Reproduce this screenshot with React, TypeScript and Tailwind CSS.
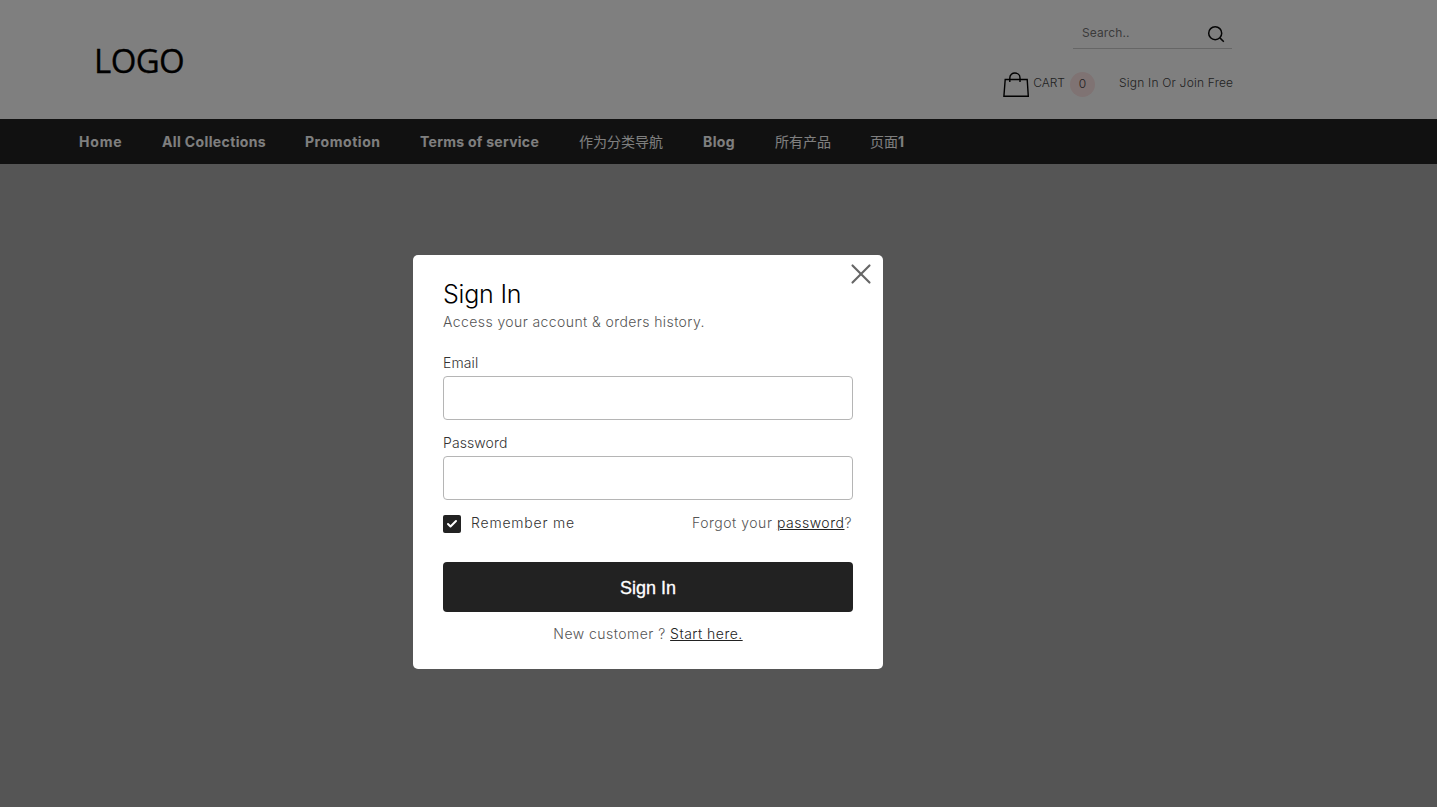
import { Check, X } from "lucide-react";

const navItems = [
  { label: "Home", cls: "w-[43px] font-bold tracking-[0.8px]" },
  { label: "All Collections", cls: "w-[103px] font-bold tracking-[0.37px]" },
  { label: "Promotion", cls: "w-[75px] font-bold tracking-[0.55px]" },
  { label: "Terms of service", cls: "w-[119px] font-bold tracking-[0.27px]" },
  { label: "作为分类导航", cls: "w-[84px] font-normal" },
  { label: "Blog", cls: "w-[32px] font-bold tracking-[0.4px]" },
  { label: "所有产品", cls: "w-[55px] font-normal" },
  { label: "页面", suffix: "1", cls: "w-[34px] font-normal" },
];

const sans = "font-['Inter','Noto_Sans_CJK_SC',sans-serif]";

function SearchIcon() {
  return (
    <svg viewBox="0 0 18 18" className="mt-[2px] h-[18px] w-[18px]" fill="none" stroke="#0a0a0a" strokeWidth="1.5">
      <circle cx="8.2" cy="8.2" r="6.5" />
      <path d="M12.9 12.9 L16.8 16.8" />
    </svg>
  );
}

function BagIcon() {
  return (
    <svg viewBox="0 0 26 26" className="h-[26px] w-[26px]" fill="none" stroke="#000" strokeWidth="1.4">
      <path d="M2.2 7.5 H24.2 L25.3 24.3 H0.9 Z" />
      <path d="M6.8 10 V6 C6.8 -0.6 17 -0.6 17 6 V10" />
    </svg>
  );
}

function Field({ label }: { label: string }) {
  return (
    <div>
      <label className="block text-[14px] font-light leading-[20px] tracking-[0.1px] text-[#333]">{label}</label>
      <input className="mt-[3px] block h-[44px] w-full rounded-[4px] border border-[#b5b5b5] bg-white px-3 outline-none" />
    </div>
  );
}

export default function App() {
  return (
    <div className={`relative flex h-[807px] flex-col overflow-hidden bg-[#aaaaaa] ${sans}`}>
      <header className="flex h-[119px] justify-between bg-white pl-[94px] pr-[204px]">
        <div className="pt-[36px] font-['Open_Sans',sans-serif] text-[33px] leading-[50px] tracking-[-0.6px] text-black [-webkit-text-stroke:0.3px_black]">LOGO</div>
        <div className="flex flex-col items-end pt-[17px]">
          <div className="mr-[1px] flex h-[32px] w-[159px] items-center justify-between border-b border-[#ccc] pl-[9px] pr-[7px]">
            <span className="text-[12px] tracking-[0.1px] text-[#777]">Search..</span>
            <SearchIcon />
          </div>
          <div className="mt-[23px] flex items-center text-[12px] font-light text-[#444]">
            <BagIcon />
            <span className="ml-[4px] -translate-y-[2px]">CART</span>
            <span className="ml-[5px] flex h-[25px] w-[25px] -translate-y-[1px] items-center justify-center rounded-full bg-[#ffe6e6]">0</span>
            <span className="ml-[24px] w-[114px] -translate-y-[2px] whitespace-nowrap tracking-[0.2px]">Sign In Or Join Free</span>
          </div>
        </div>
      </header>

      <nav className="flex h-[45px] items-center gap-[40px] bg-[#222] pl-[79px]">
        {navItems.map((item) => (
          <a key={item.label} className={`${item.cls} whitespace-nowrap text-[14px] text-white`}>
            {item.label}
            {item.suffix && <b>{item.suffix}</b>}
          </a>
        ))}
      </nav>

      <main className="flex-1" />

      {/* modal backdrop */}
      <div className="absolute inset-0 bg-black/50 pl-[413px] pt-[255px]">
        <div className="relative h-[414px] w-[470px] rounded-[5px] bg-white px-[30px] pt-[23px]">
          <X className="absolute right-[5px] top-[2px] h-[34px] w-[34px] text-[#666]" strokeWidth={1.5} absoluteStrokeWidth />
          <h2 className="text-[25px] font-light leading-[33px] tracking-[-0.2px] text-black">Sign In</h2>
          <p className="text-[14px] font-light leading-[22px] tracking-[0.41px] text-[#555]">Access your account &amp; orders history.</p>

          <div className="mt-[20px] flex flex-col gap-[13px]">
            <Field label="Email" />
            <Field label="Password" />
          </div>

          <div className="mt-[13px] flex items-center justify-between text-[14px] font-light leading-[20px]">
            <label className="flex items-center gap-[10px] tracking-[0.8px] text-[#333]">
              <span className="flex h-[18px] w-[18px] items-center justify-center rounded-[2px] bg-[#222]">
                <Check className="h-[12px] w-[12px] text-white" strokeWidth={4} />
              </span>
              <span className="pb-[2px]">Remember me</span>
            </label>
            <span className="pb-[2px] pr-[1px] tracking-[0.52px] text-[#555]">
              Forgot your <a className="text-[#222] underline">password</a>?
            </span>
          </div>

          <button className="mt-[27px] h-[50px] w-full rounded-[4px] bg-[#222] pt-[3px] font-['Liberation_Sans',sans-serif] text-[18px] text-white [-webkit-text-stroke:0.3px_white]">
            Sign In
          </button>

          <p className="mt-[12px] text-center text-[14px] font-light leading-[20px] tracking-[0.47px] text-[#555]">
            New customer ? <a className="text-[#222] underline">Start here.</a>
          </p>
        </div>
      </div>
    </div>
  );
}
